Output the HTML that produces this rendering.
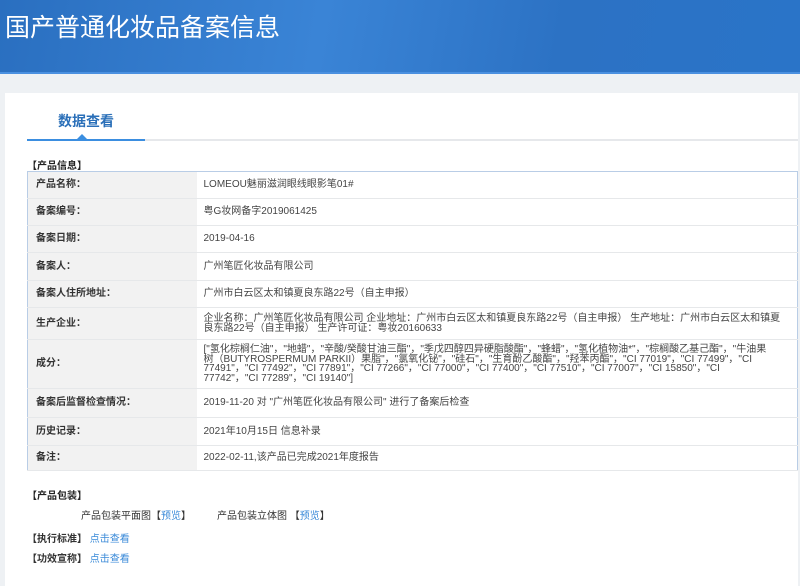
<!DOCTYPE html>
<html><head><meta charset="utf-8"><style>
*{margin:0;padding:0;box-sizing:border-box}
body{width:800px;height:586px;overflow:hidden;background:#eef1f4;font-family:"Liberation Sans","Noto Sans CJK SC",sans-serif;font-size:10px;color:#333;position:relative}
.hd{position:absolute;left:0;top:0;width:800px;height:74px;background:linear-gradient(100deg,#2a6fc0 0%,#3a84d6 40%,#2c72c4 70%,#2a74c8 100%);border-bottom:2px solid #4a90e0}
.hd h1{position:absolute;left:5px;top:8px;font-size:25px;font-weight:normal;color:#fff}
.card{position:absolute;left:5px;top:93px;width:793px;height:493px;background:#fff}
.tab{position:absolute;left:58px;top:111px;font-size:14px;color:#2a6fb8;font-weight:bold}
.line{position:absolute;left:27px;top:139px;width:771px;height:2px;background:#e6e8eb}
.line2{position:absolute;left:27px;top:139px;width:118px;height:2px;background:#3b8ee0}
.tri{position:absolute;left:77px;top:134px;width:0;height:0;border-left:5px solid transparent;border-right:5px solid transparent;border-bottom:5px solid #3b8ee0}
.sec{position:absolute;font-weight:bold;color:#222;font-size:10px}
table{position:absolute;left:27px;top:171px;width:771px;border-collapse:collapse;border:1px solid #b9cde6}
td{border-bottom:1px solid #e6e8ea;padding:0 0 0 8px;vertical-align:middle;line-height:10px}
td.l{width:169px;background:#f2f2f2;font-weight:bold;color:#333}
td.v{padding-left:7px;padding-right:12px;color:#444}
a{color:#3a8ad8;text-decoration:none}
</style></head><body>
<div class="hd"><h1>国产普通化妆品备案信息</h1></div>
<div class="card"></div>
<div class="tab">数据查看</div>
<div class="line"></div><div class="line2"></div><div class="tri"></div>
<div class="sec" style="left:27px;top:157px">【产品信息】</div>
<table>
<tr style="height:27px"><td class="l">产品名称：</td><td class="v">LOMEOU魅丽滋润眼线眼影笔01#</td></tr>
<tr style="height:27px"><td class="l">备案编号：</td><td class="v">粤G妆网备字2019061425</td></tr>
<tr style="height:27px"><td class="l">备案日期：</td><td class="v">2019-04-16</td></tr>
<tr style="height:28px"><td class="l">备案人：</td><td class="v">广州笔匠化妆品有限公司</td></tr>
<tr style="height:27px"><td class="l">备案人住所地址：</td><td class="v">广州市白云区太和镇夏良东路22号（自主申报）</td></tr>
<tr style="height:32px"><td class="l">生产企业：</td><td class="v">企业名称：广州笔匠化妆品有限公司 企业地址：广州市白云区太和镇夏良东路22号（自主申报） 生产地址：广州市白云区太和镇夏良东路22号（自主申报） 生产许可证：粤妆20160633</td></tr>
<tr style="height:49px"><td class="l">成分：</td><td class="v" style="line-height:9.5px;font-size:10px;padding-right:30px">["氢化棕榈仁油"，"地蜡"，"辛酸/癸酸甘油三酯"，"季戊四醇四异硬脂酸酯"，"蜂蜡"，"氢化植物油*"，"棕榈酸乙基己酯"，"牛油果树（BUTYROSPERMUM PARKII）果脂"，"氯氧化铋"，"硅石"，"生育酚乙酸酯"，"羟苯丙酯"，"CI 77019"，"CI 77499"，"CI 77491"，"CI 77492"，"CI 77891"，"CI 77266"，"CI 77000"，"CI 77400"，"CI 77510"，"CI 77007"，"CI 15850"，"CI 77742"，"CI 77289"，"CI 19140"]</td></tr>
<tr style="height:29px"><td class="l">备案后监督检查情况：</td><td class="v">2019-11-20 对 "广州笔匠化妆品有限公司" 进行了备案后检查</td></tr>
<tr style="height:28px"><td class="l">历史记录：</td><td class="v">2021年10月15日 信息补录</td></tr>
<tr style="height:25px"><td class="l">备注：</td><td class="v">2022-02-11,该产品已完成2021年度报告</td></tr>
</table>
<div class="sec" style="left:27px;top:487px">【产品包装】</div>
<div style="position:absolute;left:81px;top:507px">产品包装平面图【<a>预览</a>】</div>
<div style="position:absolute;left:217px;top:507px">产品包装立体图 【<a>预览</a>】</div>
<div style="position:absolute;left:27px;top:530px"><b>【执行标准】</b> <a>点击查看</a></div>
<div style="position:absolute;left:27px;top:550px"><b>【功效宣称】</b> <a>点击查看</a></div>
</body></html>
